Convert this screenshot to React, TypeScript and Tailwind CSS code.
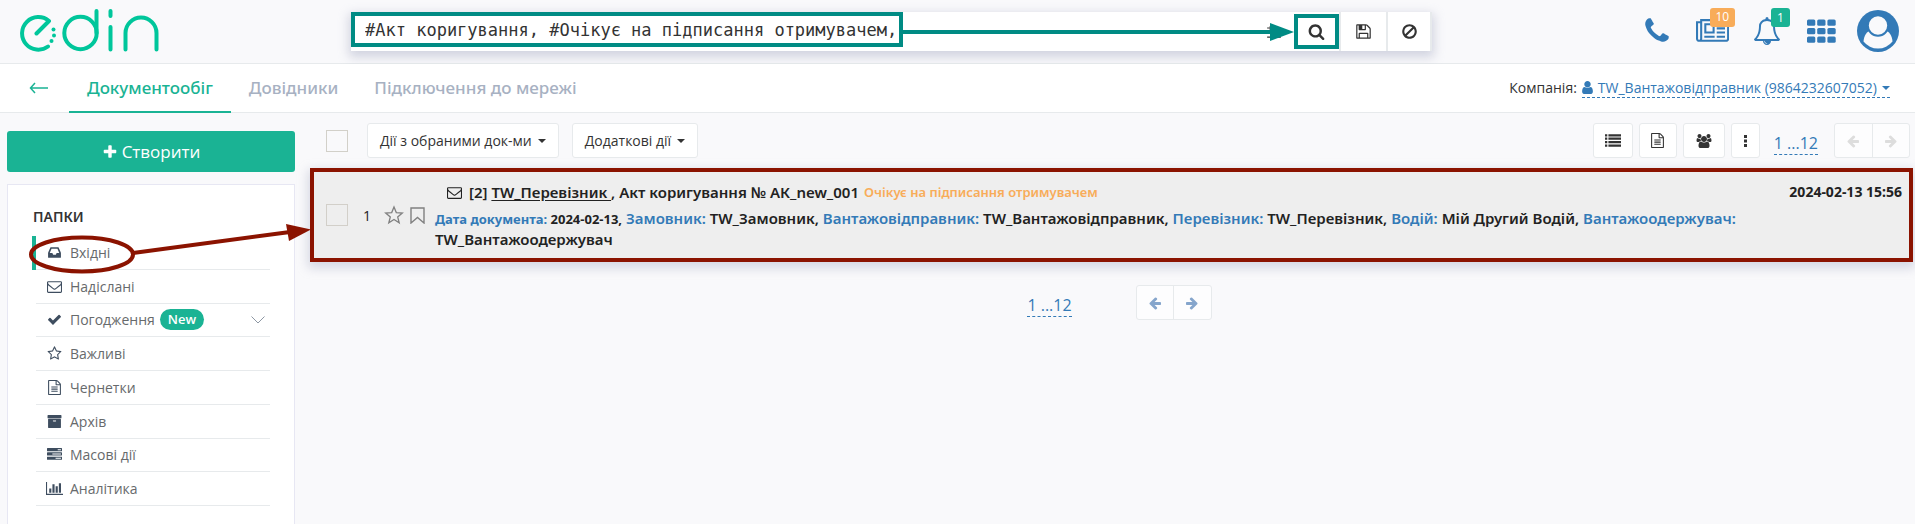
import type { ReactNode } from 'react';

type Glyph = { d: string; w?: number };

const G = {
  search: { d: 'M1216 832q0-185-131.5-316.5t-316.5-131.5-316.5 131.5-131.5 316.5 131.5 316.5 316.5 131.5 316.5-131.5 131.5-316.5zm512 832q0 52-38 90t-90 38q-54 0-90-38l-343-342q-179 124-399 124-143 0-273.5-55.5t-225-150-150-225-55.5-273.5 55.5-273.5 150-225 225-150 273.5-55.5 273.5 55.5 225 150 150 225 55.5 273.5q0 220-124 399l343 343q37 37 37 90z' },
  envelope: { d: 'M1664 1504v-768q-32 36-69 66-268 206-426 338-51 43-83 67t-86.5 48.5-102.5 24.5h-2q-48 0-102.5-24.5t-86.5-48.5-83-67q-158-132-426-338-37-30-69-66v768q0 13 9.5 22.5t22.5 9.5h1472q13 0 22.5-9.5t9.5-22.5zm0-1051v-24.5l-.5-13-3-12.5-5.5-9-9-7.5-14-2.5h-1472q-13 0-22.5 9.5t-9.5 22.5q0 168 147 284 193 152 401 317 6 5 35 29.5t46 37.5 44.5 31.5 50.5 27.5 43 9h2q20 0 43-9t50.5-27.5 44.5-31.5 46-37.5 35-29.5q208-165 401-317 54-43 100.5-115.5t46.5-131.5zm128-37v1088q0 66-47 113t-113 47h-1472q-66 0-113-47t-47-113v-1088q0-66 47-113t113-47h1472q66 0 113 47t47 113z' },
  save: { d: 'M512 1536h768v-384h-768v384zm896 0h128v-896q0-14-10-38.5t-20-34.5l-281-281q-10-10-34-20t-39-10v416q0 40-28 68t-68 28h-576q-40 0-68-28t-28-68v-416h-128v1280h128v-416q0-40 28-68t68-28h832q40 0 68 28t28 68v416zm-384-928v-320q0-13-9.5-22.5t-22.5-9.5h-192q-13 0-22.5 9.5t-9.5 22.5v320q0 13 9.5 22.5t22.5 9.5h192q13 0 22.5-9.5t9.5-22.5zm640 32v928q0 40-28 68t-68 28h-1344q-40 0-68-28t-28-68v-1344q0-40 28-68t68-28h928q40 0 88 20t76 48l280 280q28 28 48 76t20 88z' },
  ban: { d: 'M1440 893q0-161-87-295l-754 753q137 89 297 89 111 0 211.5-43.5t173.5-116.5 116-174.5 43-212.5zm-999 299l755-754q-135-91-300-91-148 0-273 73t-198 199-73 274q0 162 89 299zm1223-299q0 157-61 300t-163.5 246-245 164-298.5 61-298.5-61-245-164-163.5-246-61-300 61-299.5 163.5-245.5 245-164 298.5-61 298.5 61 245 164 163.5 245.5 61 299.5z' },
  phone: { d: 'M1600 1240q0 27-10 70.5t-21 68.5q-21 50-122 106-94 51-186 51-27 0-52.5-3.5t-57.5-12.5-47.5-14.5-55.5-20.5-49-18q-98-35-175-83-128-79-264.5-215.5t-215.5-264.5q-48-77-83-175-3-9-18-49t-20.5-55.5-14.5-47.5-12.5-57.5-3.5-52.5q0-92 51-186 56-101 106-122 25-11 68.5-21t70.5-10q14 0 21 3 18 6 53 76 11 19 30 54t35 63.5 31 53.5q3 4 17.5 25t21.5 35.5 7 28.5q0 20-28.5 50t-62 55-62 53-28.5 46q0 9 5 22.5t8.5 20.5 14 24 11.5 19q76 137 174 235t235 174q2 1 19 11.5t24 14 20.5 8.5 22.5 5q18 0 46-28.5t53-62 55-62 50-28.5q14 0 28.5 7t35.5 21.5 25 17.5q25 15 53.5 31t63.5 35 54 30q70 35 76 53 3 7 3 21z' },
  check: { d: 'M1671 566q0 40-28 68l-724 724-136 136q-28 28-68 28t-68-28l-136-136-362-362q-28-28-28-68t28-68l136-136q28-28 68-28t68 28l294 295 656-657q28-28 68-28t68 28l136 136q28 28 28 68z' },
  plus: { d: 'M1600 736v192q0 40-28 68t-68 28h-416v416q0 40-28 68t-68 28h-192q-40 0-68-28t-28-68v-416h-416q-40 0-68-28t-28-68v-192q0-40 28-68t68-28h416v-416q0-40 28-68t68-28h192q40 0 68 28t28 68v416h416q40 0 68 28t28 68z' },
  star: { d: 'M1201 1004l306-297-422-62-189-382-189 382-422 62 306 297-73 421 378-199 377 199zm527-357q0 22-26 48l-363 354 86 500q1 7 1 20 0 50-41 50-19 0-40-12l-449-236-449 236q-22 12-40 12-21 0-31.5-14.5t-10.5-35.5q0-6 2-20l86-500-364-354q-25-27-25-48 0-37 56-46l502-73 225-455q19-41 49-41t49 41l225 455 502 73q56 9 56 46z' },
  file: { d: 'M1596 380q28 28 48 76t20 88v1152q0 40-28 68t-68 28h-1344q-40 0-68-28t-28-68v-1600q0-40 28-68t68-28h896q40 0 88 20t76 48zm-444-244v376h376q-10-29-22-41l-313-313q-12-12-41-22zm384 1528v-1024h-416q-40 0-68-28t-28-68v-416h-768v1536h1280zm-1024-864q0-14 9-23t23-9h704q14 0 23 9t9 23v64q0 14-9 23t-23 9h-704q-14 0-23-9t-9-23v-64zm736 224q14 0 23 9t9 23v64q0 14-9 23t-23 9h-704q-14 0-23-9t-9-23v-64q0-14 9-23t23-9h704zm0 256q14 0 23 9t9 23v64q0 14-9 23t-23 9h-704q-14 0-23-9t-9-23v-64q0-14 9-23t23-9h704z' },
  archive: { d: 'M1088 832q0-26-19-45t-45-19h-256q-26 0-45 19t-19 45 19 45 45 19h256q26 0 45-19t19-45zm576-192v960q0 26-19 45t-45 19h-1408q-26 0-45-19t-19-45v-960q0-26 19-45t45-19h1408q26 0 45 19t19 45zm64-448v256q0 26-19 45t-45 19h-1536q-26 0-45-19t-19-45v-256q0-26 19-45t45-19h1536q26 0 45 19t19 45z' },
  tasks: { d: 'M1024 1408h640v-128h-640v128zm-384-512h1024v-128h-1024v128zm640-512h384v-128h-384v128zm512 832v256q0 26-19 45t-45 19h-1664q-26 0-45-19t-19-45v-256q0-26 19-45t45-19h1664q26 0 45 19t19 45zm0-512v256q0 26-19 45t-45 19h-1664q-26 0-45-19t-19-45v-256q0-26 19-45t45-19h1664q26 0 45 19t19 45zm0-512v256q0 26-19 45t-45 19h-1664q-26 0-45-19t-19-45v-256q0-26 19-45t45-19h1664q26 0 45 19t19 45z' },
  chart: { w: 2048, d: 'M640 896v512h-256v-512h256zm384-512v1024h-256v-1024h256zm1024 1152v128h-2048v-1536h128v1408h1920zm-640-896v768h-256v-768h256zm384-384v1152h-256v-1152h256z' },
  inbox: { d: 'M1151 960h316q-1-3-2.5-8.5t-2.5-7.5l-212-496h-708l-212 496q-1 3-2.5 8.5t-2.5 7.5h316l95 192h320zm513 30v482q0 26-19 45t-45 19h-1408q-26 0-45-19t-19-45v-482q0-62 25-123l238-552q10-25 36.5-42t52.5-17h832q26 0 52.5 17t36.5 42l238 552q25 61 25 123z' },
  news: { w: 2048, d: 'M1024 512h-384v384h384v-384zm128 640v128h-640v-128h640zm0-768v640h-640v-640h640zm640 768v128h-512v-128h512zm0-256v128h-512v-128h512zm0-256v128h-512v-128h512zm0-256v128h-512v-128h512zm-1536 960v-960h-128v960q0 26 19 45t45 19 45-19 19-45zm1664 0v-1088h-1536v1088q0 33-11 64h1483q26 0 45-19t19-45zm128-1216v1216q0 80-56 136t-136 56h-1664q-80 0-136-56t-56-136v-1088h256v-128h1792z' },
  bell: { d: 'M912 1696q0-16-16-16-59 0-101.5-42.5t-42.5-101.5q0-16-16-16t-16 16q0 73 51.5 124.5t124.5 51.5q16 0 16-16zm-666-288h1300q-266-300-266-832 0-51-24-105t-69-103-121.5-80.5-169.5-31.5-169.5 31.5-121.5 80.5-69 103-24 105q0 532-266 832zm1482 0q0 52-38 90t-90 38h-448q0 106-75 181t-181 75-181-75-75-181h-448q-52 0-90-38t-38-90q50-42 91-88t85-119.5 74.5-158.5 50-206 19.5-260q0-152 117-282.5t307-158.5q-8-19-8-39 0-40 28-68t68-28 68 28 28 68q0 20-8 39 190 28 307 158.5t117 282.5q0 139 19.5 260t50 206 74.5 158.5 85 119.5 91 88z' },
  user: { d: 'M1536 1399q0 109-62.5 187t-150.5 78h-854q-88 0-150.5-78t-62.5-187q0-85 8.5-160.5t31.5-152 58.5-131 94-89 134.5-34.5q131 128 313 128t313-128q76 0 134.5 34.5t94 89 58.5 131 31.5 152 8.5 160.5zm-256-887q0 159-112.5 271.5t-271.5 112.5-271.5-112.5-112.5-271.5 112.5-271.5 271.5-112.5 271.5 112.5 112.5 271.5z' },
  users: { w: 2048, d: 'M657 896q-162 5-265 128h-134q-82 0-138-40.5t-56-118.5q0-353 124-353 6 0 43.5 21t97.5 42.5 119 21.5q67 0 133-23-5 37-5 66 0 139 81 256zm1071 637q0 120-73 189.5t-194 69.5h-874q-121 0-194-69.5t-73-189.5q0-53 3.5-103.5t14-109 26.5-108.5 43-97.5 62-81 85.5-53.5 111.5-20q10 0 43 21.5t73 48 107 48 135 21.5 135-21.5 107-48 73-48 43-21.5q61 0 111.5 20t85.5 53.5 62 81 43 97.5 26.5 108.5 14 109 3.5 103.5zm-1024-1277q0 106-75 181t-181 75-181-75-75-181 75-181 181-75 181 75 75 181zm704 384q0 159-112.5 271.5t-271.5 112.5-271.5-112.5-112.5-271.5 112.5-271.5 271.5-112.5 271.5 112.5 112.5 271.5zm576 225q0 78-56 118.5t-138 40.5h-134q-103-123-265-128 81-117 81-256 0-29-5-66 66 23 133 23 59 0 119-21.5t97.5-42.5 43.5-21q124 0 124 353zm-128-609q0 106-75 181t-181 75-181-75-75-181 75-181 181-75 181 75 75 181z' },
  list: { d: 'M0 128h256v256H0zM0 512h256v256H0zM0 896h256v256H0zM0 1280h256v256H0zM384 128h1408v256H384zM384 512h1408v256H384zM384 896h1408v256H384zM384 1280h1408v256H384z' },
  left: { d: 'M1664 896v128q0 53-32.5 90.5t-84.5 37.5h-704l293 294q38 36 38 90t-38 90l-75 76q-37 37-90 37-52 0-91-37l-651-652q-37-37-37-90 0-52 37-91l651-650q38-38 91-38 52 0 90 38l75 74q38 38 38 91t-38 91l-293 293h704q52 0 84.5 37.5t32.5 90.5z' },
  sliders: { d: 'M480 1408v128h-352v-128h352zm352-128q26 0 45 19t19 45v256q0 26-19 45t-45 19h-256q-26 0-45-19t-19-45v-256q0-26 19-45t45-19h256zm160-384v128h-864v-128h864zm-640-512v128h-224v-128h224zm1312 1024v128h-736v-128h736zm-960-1152q26 0 45 19t19 45v256q0 26-19 45t-45 19h-256q-26 0-45-19t-19-45v-256q0-26 19-45t45-19h256zm640 512q26 0 45 19t19 45v256q0 26-19 45t-45 19h-256q-26 0-45-19t-19-45v-256q0-26 19-45t45-19h256zm320 128v128h-224v-128h224zm0-512v128h-864v-128h864z' },
} satisfies Record<string, Glyph>;

function Icon({ g, className = 'h-[14px]' }: { g: Glyph; className?: string }) {
  return (
    <svg viewBox={`0 0 ${g.w ?? 1792} 1792`} className={`shrink-0 ${className}`} fill="currentColor" aria-hidden="true">
      <path d={g.d} />
    </svg>
  );
}

function Caret() {
  return (
    <svg viewBox="0 0 8 4" className="h-1 w-2 shrink-0" fill="currentColor" aria-hidden="true">
      <path d="M0 0h8L4 4z" />
    </svg>
  );
}

function Logo() {
  return (
    <svg viewBox="0 0 140 44" className="h-11 w-[140px]" fill="none" stroke="#00c69b" strokeWidth="4" strokeLinecap="round" strokeLinejoin="round" role="img" aria-label="edin">
      <path d="M28 37.500A16.300 16.300 0 1 1 29 12L16.500 24.500" />
      <circle cx="60.500" cy="24" r="16.200" />
      <path d="M76.500 2v22M90.500 2v5M90.500 18v22.500M105.500 40.500V24a15.500 15.500 0 0 1 31 0V40.500" />
      <g fill="#00c69b" stroke="none">
        <circle cx="33.500" cy="20.500" r="2" />
        <circle cx="34" cy="26.500" r="2" />
        <circle cx="31.500" cy="32" r="2" />
      </g>
    </svg>
  );
}

function Avatar() {
  return (
    <svg viewBox="0 0 42 42" className="size-[42px]" aria-hidden="true">
      <circle cx="21" cy="21" r="21" fill="#337ab7" />
      <path d="M6.500 31.500c.5-6 3-10 7.500-11h14c4.500 1 7 5 7.500 11A18.500 18.500 0 0 1 6.500 31.500z" fill="#f9f9fb" />
      <circle cx="21" cy="15.500" r="10.200" fill="#f9f9fb" stroke="#337ab7" strokeWidth="2" />
    </svg>
  );
}

function Header() {
  return (
    <header className="flex h-16 shrink-0 items-start border-b border-[#e7eaec]">
      <a href="#home" aria-label="edin" className="w-[351px] shrink-0 pt-[9px] pl-5">
        <Logo />
      </a>
      <form className="mt-3 flex h-[39px] min-w-0 flex-1 items-stretch bg-white text-[#333] shadow-[0_4px_10px_2px_rgba(160,164,190,0.45)]">
        <input
          aria-label="Пошук документів"
          defaultValue="#Акт коригування, #Очікує на підписання отримувачем,"
          className="h-[35px] w-[552px] shrink-0 border-4 border-[#008b84] bg-white pl-[10px] font-['DejaVu_Sans_Mono',monospace] text-[17px] outline-none"
        />
        <div className="relative flex h-[39px] min-w-0 flex-1 items-center">
          <button type="button" aria-label="Фільтри" className="absolute right-3">
            <Icon g={G.sliders} className="h-4" />
          </button>
          <div className="relative flex w-full items-center text-[#008b84]">
            <div className="h-1 flex-1 bg-[#008b84]" />
            <svg viewBox="0 0 24 18" className="h-[18px] w-6" fill="currentColor" aria-hidden="true">
              <path d="M0 0l24 9-24 9z" />
            </svg>
          </div>
        </div>
        <button type="submit" aria-label="Шукати" className="mt-[2px] flex h-[35px] w-[45px] items-center justify-center border-4 border-[#008b84]">
          <Icon g={G.search} className="h-[17px]" />
        </button>
        <button type="button" aria-label="Зберегти" className="flex w-[47px] items-center justify-center border-l-2 border-[#e7eaec]">
          <Icon g={G.save} className="h-[17px]" />
        </button>
        <button type="button" aria-label="Скинути" className="flex w-[46px] items-center justify-center border-x-2 border-[#e7eaec]">
          <Icon g={G.ban} className="h-[17px]" />
        </button>
      </form>
      <div className="flex h-[62px] w-[483px] shrink-0 items-center justify-end pr-4 text-[#337ab7]">
        <button type="button" aria-label="Телефон" className="mr-6">
          <Icon g={G.phone} className="h-[30px]" />
        </button>
        <button type="button" aria-label="Новини" className="relative mr-6">
          <Icon g={G.news} className="h-[29px]" />
          <span className="absolute -top-[9px] left-[14px] flex h-[19px] w-[25px] items-center justify-center rounded-[3px] bg-[#f8ac59] text-[12px] font-medium text-white">10</span>
        </button>
        <button type="button" aria-label="Сповіщення" className="relative mr-[26px]">
          <Icon g={G.bell} className="h-7" />
          <span className="absolute -top-[9px] left-[18px] flex h-[19px] w-[19px] items-center justify-center rounded-[3px] bg-[#1ab394] text-[12px] font-medium text-white">1</span>
        </button>
        <button type="button" aria-label="Застосунки" className="mr-[21px]">
          <svg viewBox="0 0 29 24" className="h-6 w-[29px]" fill="currentColor" aria-hidden="true">
            {[0.5, 9, 17.5].map((y) =>
              [0, 10.2, 20.4].map((x) => <rect key={`${x}-${y}`} x={x} y={y} width="8.300" height="6.300" rx="1.500" />),
            )}
          </svg>
        </button>
        <button type="button" aria-label="Профіль">
          <Avatar />
        </button>
      </div>
    </header>
  );
}

function Nav() {
  return (
    <nav className="flex h-[49px] shrink-0 items-stretch border-b border-[#e7eaec] bg-white">
      <a href="#back" aria-label="Назад" className="flex w-[69px] items-center pl-[29px] text-[#1ab394]">
        <svg viewBox="0 0 20 12" className="h-3 w-5" fill="none" stroke="currentColor" strokeWidth="1.500" aria-hidden="true">
          <path d="M19 6H1.500M6 1L1.500 6L6 11" />
        </svg>
      </a>
      <div className="flex items-stretch font-['Noto_Sans',sans-serif] text-[17px] font-medium text-[#a7b1c2]">
        <a href="#docs" className="-mb-px flex items-center border-b-2 border-[#1ab394] px-[18px] text-[#1ab394]">Документообіг</a>
        <a href="#refs" className="flex items-center px-[18px]">Довідники</a>
        <a href="#network" className="flex items-center px-[18px]">Підключення до мережі</a>
      </div>
      <div className="ml-auto flex items-center gap-[5px] pr-[25px] text-[14px] leading-[18px] text-[#333]">
        Компанія:
        <a href="#company" className="flex items-center gap-[5px] border-b border-dashed border-[#337ab7] text-[#337ab7]">
          <Icon g={G.user} className="-mx-[2px] h-[15px]" />
          TW_Вантажовідправник (9864232607052)
          <Caret />
        </a>
      </div>
    </nav>
  );
}

const FOLDERS: { label: string; g: Glyph; active?: boolean; isNew?: boolean }[] = [
  { label: 'Вхідні', g: G.inbox, active: true },
  { label: 'Надіслані', g: G.envelope },
  { label: 'Погодження', g: G.check, isNew: true },
  { label: 'Важливі', g: G.star },
  { label: 'Чернетки', g: G.file },
  { label: 'Архів', g: G.archive },
  { label: 'Масові дії', g: G.tasks },
  { label: 'Аналітика', g: G.chart },
];

function Sidebar() {
  return (
    <aside className="flex w-72 shrink-0 flex-col">
      <button type="button" className="flex h-[41px] shrink-0 items-center justify-center gap-1 rounded-[3px] bg-[#1ab394] text-[17px] text-white">
        <Icon g={G.plus} className="h-4" />
        Створити
      </button>
      <div className="mt-3 flex-1 border border-b-0 border-[#e7e7f3] bg-white px-6 pt-[22px]">
        <h2 className="pl-px font-['Noto_Sans',sans-serif] text-[14px] leading-5 font-semibold text-[#333]">ПАПКИ</h2>
        <ul className="mt-[9px] grid h-[270px] auto-rows-fr">
          {FOLDERS.map((f) => (
            <li key={f.label} className={f.active ? 'border-l-4 border-[#1ab394]' : 'border-l-4 border-transparent'}>
              <a href="#folder" className="flex h-full items-center border-b border-[#e7eaec] text-[14px] text-[#676a6c]">
                <span className="ml-[9px] flex w-[19px] justify-center text-[#3e4d5f]">
                  <Icon g={f.g} className="h-[15px]" />
                </span>
                <span className="ml-[6px]">{f.label}</span>
                {f.isNew && <span className="ml-[5px] rounded-full bg-[#1ab394] px-2 text-[13px] leading-[21px] font-semibold text-white">New</span>}
                {f.isNew && (
                  <svg viewBox="0 0 14 8" className="mr-[5px] ml-auto h-2 w-[14px]" fill="none" stroke="#8d97a3" aria-hidden="true">
                    <path d="M.5.5L7 7 13.500.5" />
                  </svg>
                )}
              </a>
            </li>
          ))}
        </ul>
      </div>
    </aside>
  );
}

function ToolButton({ label, className, children }: { label: string; className: string; children: ReactNode }) {
  return (
    <button type="button" aria-label={label} className={`flex h-[35px] items-center justify-center rounded-[3px] border border-[#e7eaec] bg-white text-[#333] ${className}`}>
      {children}
    </button>
  );
}

function Dropdown({ label }: { label: string }) {
  return (
    <button type="button" className="flex h-[35px] items-center gap-[6px] rounded-[3px] border border-[#e7eaec] bg-white px-3 text-[14px] text-[#333]">
      {label}
      <Caret />
    </button>
  );
}

function Pager({ className, muted }: { className: string; muted?: boolean }) {
  return (
    <div className="flex items-center">
      <a href="#pages" className="mt-[6px] border-b border-dashed border-[#337ab7] text-[16px] leading-[22px] text-[#337ab7]">1 ...12</a>
      <div className={`flex h-[35px] w-[76px] divide-x divide-[#e7eaec] rounded-[3px] border border-[#e7eaec] bg-[#fdfdfe] ${muted ? 'text-[#ddd]' : 'text-[#85a5cc]'} ${className}`}>
        <button type="button" aria-label="Попередня" className="flex flex-1 items-center justify-center">
          <Icon g={G.left} />
        </button>
        <button type="button" aria-label="Наступна" className="flex flex-1 items-center justify-center">
          <Icon g={G.left} className="h-[14px] -scale-x-100" />
        </button>
      </div>
    </div>
  );
}

function Toolbar() {
  return (
    <div className="flex h-[35px] items-center">
      <input type="checkbox" aria-label="Обрати всі" className="mr-[19px] ml-4 size-[22px] shrink-0 appearance-none border border-[#d2d0c9]" />
      <Dropdown label="Дії з обраними док-ми" />
      <div className="w-[13px]" />
      <Dropdown label="Додаткові дії" />
      <div className="ml-auto flex items-center gap-[6px] pr-[5px]">
        <ToolButton label="Список" className="w-10"><Icon g={G.list} className="h-4" /></ToolButton>
        <ToolButton label="Документ" className="w-[38px]"><Icon g={G.file} className="h-[15px]" /></ToolButton>
        <ToolButton label="Користувачі" className="w-[42px]"><Icon g={G.users} /></ToolButton>
        <ToolButton label="Більше" className="mr-2 w-[29px]">
          <svg viewBox="0 0 3 12" className="h-3 w-[3px]" fill="currentColor" aria-hidden="true">
            <path d="M0 0h3v3H0zM0 4.500h3v3H0zM0 9h3v3H0z" />
          </svg>
        </ToolButton>
        <Pager className="ml-4" muted />
      </div>
    </div>
  );
}

function Key({ children }: { children: ReactNode }) {
  return <span className="text-[#337ab7]">{children}</span>;
}

function DocumentRow() {
  return (
    <article className="mt-[10px] mr-[2px] flex h-[94px] border-4 border-[#8b1300] bg-[#eee] text-[14px] text-[#222] shadow-[0_4px_10px_2px_rgba(160,164,190,0.4)]">
      <div className="flex h-[86px] items-center pl-3">
        <input type="checkbox" aria-label="Обрати документ" className="size-[22px] shrink-0 appearance-none border border-[#d2cfc9]" />
        <span className="ml-[14px] w-[10px] text-center">1</span>
        <button type="button" aria-label="Важливий" className="ml-3 text-[#808080]">
          <svg viewBox="0 0 20 20" className="size-5" fill="none" stroke="currentColor" strokeWidth="1.300" aria-hidden="true">
            <path d="M10 2l2.300 5.600 6 .4-4.600 3.900 1.500 5.900L10 14.500l-5.200 3.300 1.500-5.900L1.700 8l6-.4z" />
          </svg>
        </button>
        <button type="button" aria-label="Закладка" className="mr-[10px] ml-[6px] text-[#808080]">
          <svg viewBox="0 0 15 17" className="h-[17px] w-[15px]" fill="none" stroke="currentColor" strokeWidth="1.400" aria-hidden="true">
            <path d="M1 1h13v15l-6.500-5.500L1 16z" />
          </svg>
        </button>
      </div>
      <div className="min-w-0 flex-1 pt-[10px] font-['Noto_Sans',sans-serif] text-[15px] font-semibold">
        <div className="flex items-center pl-3 leading-5">
          <Icon g={G.envelope} className="mr-[7px] h-[15px]" />
          <span>[2] <a href="#doc" className="underline underline-offset-2">TW_Перевізник </a>, Акт коригування № АК_new_001</span>
          <span className="ml-[5px] text-[13px] text-[#f8ac59]">Очікує на підписання отримувачем</span>
          <time className="ml-auto pr-[7px] text-[14px] font-bold">2024-02-13 15:56</time>
        </div>
        <p className="mt-[6px] pr-[140px] leading-5">
          <span className="text-[13px] font-bold"><Key>Дата документа:</Key> 2024-02-13,</span>{' '}
          <Key>Замовник:</Key> TW_Замовник, <Key>Вантажовідправник:</Key> TW_Вантажовідправник, <Key>Перевізник:</Key> TW_Перевізник, <Key>Водій:</Key> Мій Другий Водій, <Key>Вантажоодержувач:</Key> TW_Вантажоодержувач
        </p>
      </div>
    </article>
  );
}

function Callout() {
  return (
    <svg className="pointer-events-none absolute top-[215px] left-0 h-[60px] w-[312px]" viewBox="0 0 312 60" fill="none" stroke="#8b1300" strokeWidth="4" aria-hidden="true">
      <ellipse cx="82" cy="39.500" rx="51" ry="17" />
      <path d="M133 38L290 17" />
      <path d="M286 9l25 5.500L289 26z" fill="#8b1300" stroke="none" />
    </svg>
  );
}

export default function App() {
  return (
    <div className="relative flex min-h-screen flex-col bg-[#f9f9fb] font-['Open_Sans',sans-serif]">
      <Header />
      <Nav />
      <div className="flex flex-1">
        <div className="flex pt-[18px] pl-[7px]">
          <Sidebar />
        </div>
        <main className="min-w-0 flex-1 pt-[10px] pl-[15px]">
          <Toolbar />
          <DocumentRow />
          <div className="mt-[23px] flex justify-center pl-[14px]">
            <Pager className="ml-16" />
          </div>
        </main>
      </div>
      <Callout />
    </div>
  );
}
